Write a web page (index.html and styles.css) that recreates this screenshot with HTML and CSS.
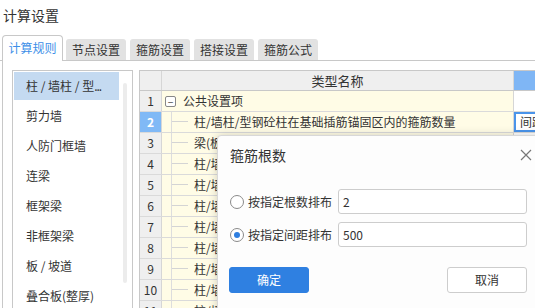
FILE: index.html
```html
<!DOCTYPE html>
<html lang="zh-CN">
<head>
<meta charset="utf-8">
<title>计算设置</title>
<link rel="stylesheet" href="styles.css">
</head>
<body>
<div class="page">
  <div class="title">计算设置</div>
  <div class="tabs">
    <div class="tab active">计算规则</div>
    <div class="tab">节点设置</div>
    <div class="tab">箍筋设置</div>
    <div class="tab">搭接设置</div>
    <div class="tab">箍筋公式</div>
  </div>
  <div class="panel">
    <div class="list">
      <div class="items">
        <div class="item selected">柱 / 墙柱 / 型<span class="dots">...</span></div>
        <div class="item">剪力墙</div>
        <div class="item">人防门框墙</div>
        <div class="item">连梁</div>
        <div class="item">框架梁</div>
        <div class="item">非框架梁</div>
        <div class="item">板 / 坡道</div>
        <div class="item">叠合板(整厚)</div>
      </div>
      <div class="scroll"></div>
    </div>
    <div class="grid">
      <div class="row head">
        <div class="num"></div>
        <div class="name center">类型名称</div>
        <div class="val hl"></div>
      </div>
      <div class="row">
        <div class="num">1</div>
        <div class="name"><span class="fold">−</span>公共设置项</div>
        <div class="val"></div>
      </div>
      <div class="row">
        <div class="num cur">2</div>
        <div class="name"><span class="branch"></span>柱/墙柱/型钢砼柱在基础插筋锚固区内的箍筋数量</div>
        <div class="val sel">间距</div>
      </div>
      <div class="row"><div class="num">3</div><div class="name"><span class="branch"></span>梁(板)上柱插筋锚固区内的箍筋数量</div><div class="val"></div></div>
      <div class="row"><div class="num">4</div><div class="name"><span class="branch"></span>柱/墙柱/型钢砼柱箍筋加密区根数</div><div class="val"></div></div>
      <div class="row"><div class="num">5</div><div class="name"><span class="branch"></span>柱/墙柱/型钢砼柱箍筋非加密区根数</div><div class="val"></div></div>
      <div class="row"><div class="num">6</div><div class="name"><span class="branch"></span>柱/墙柱/型钢砼柱箍筋长度计算</div><div class="val"></div></div>
      <div class="row"><div class="num">7</div><div class="name"><span class="branch"></span>柱/墙柱/型钢砼柱纵筋搭接范围</div><div class="val"></div></div>
      <div class="row"><div class="num">8</div><div class="name"><span class="branch"></span>柱/墙柱/型钢砼柱顶部节点</div><div class="val"></div></div>
      <div class="row"><div class="num">9</div><div class="name"><span class="branch"></span>柱/墙柱/型钢砼柱根部节点</div><div class="val"></div></div>
      <div class="row"><div class="num">10</div><div class="name"><span class="branch"></span>柱/墙柱/型钢砼柱变截面</div><div class="val"></div></div>
      <div class="row"><div class="num">11</div><div class="name"><span class="branch"></span>柱/墙柱/型钢砼柱插筋</div><div class="val"></div></div>
    </div>
  </div>
</div>

<div class="dialog">
  <div class="dlg-head">
    <span class="dlg-title">箍筋根数</span>
    <svg class="close" width="12" height="12" viewBox="0 0 12 12"><path d="M1 1L11 11M11 1L1 11" stroke="#777" stroke-width="1.2" fill="none"/></svg>
  </div>
  <div class="dlg-body">
    <div class="opt">
      <span class="radio"></span>
      <span class="lbl">按指定根数排布</span>
      <div class="input">2</div>
    </div>
    <div class="opt">
      <span class="radio on"></span>
      <span class="lbl">按指定间距排布</span>
      <div class="input">500</div>
    </div>
    <div class="btns">
      <div class="btn primary">确定</div>
      <div class="btn">取消</div>
    </div>
  </div>
</div>
</body>
</html>
```

FILE: styles.css
```css
* { box-sizing: border-box; }
html, body {
  margin: 0;
  padding: 0;
  width: 535px;
  height: 308px;
  overflow: hidden;
  background: #fff;
  font-family: "Noto Sans CJK SC", "Noto Sans", sans-serif;
  color: #333;
  font-size: 12px;
}
.page { position: relative; }
.title {
  font-size: 14px;
  line-height: 20px;
  padding: 5px 0 0 3px;
  height: 35px;
}
.tabs {
  display: flex;
  align-items: flex-end;
  gap: 4px;
  height: 26px;
  border-bottom: 1px solid #c8c8c8;
  padding-left: 2px;
}
.tab {
  width: 60px;
  height: 21px;
  line-height: 21px;
  text-align: center;
  background: #e2e2e2;
  border-radius: 3px 3px 0 0;
  color: #333;
}
.tab.active {
  width: 61px;
  height: 26px;
  line-height: 24px;
  margin-bottom: -1px;
  background: #fff;
  border: 1px solid #c8c8c8;
  border-bottom: none;
  border-radius: 4px 4px 0 0;
  color: #3d8fe8;
  margin-right: -1px;
}
.panel {
  display: flex;
  align-items: flex-start;
  gap: 6px;
  margin-left: 2px;
  border-left: 1px solid #c8c8c8;
  padding: 9px 0 0 9px;
  height: 260px;
}
.list {
  width: 121px;
  height: 260px;
  border: 1px solid #c8c8c8;
  display: flex;
  padding: 1px 0 0 1px;
  flex-shrink: 0;
}
.items {
  width: 105px;
  flex-shrink: 0;
  display: flex;
  flex-direction: column;
  gap: 2px;
}
.item {
  height: 28px;
  line-height: 28px;
  padding-left: 12px;
  white-space: nowrap;
}
.dots { letter-spacing: -1px; }
.item.selected { background: #c4daf1; }
.scroll {
  width: 4px;
  height: 200px;
  margin: 11px 0 0 4px;
  background: #ececec;
  border-radius: 2px;
}
.grid {
  flex: 1;
  border-left: 1px solid #c8c8c8;
  border-top: 1px solid #c8c8c8;
  min-width: 0;
}
.row {
  display: grid;
  grid-template-columns: 22px 352px 60px;
  height: 21px;
  border-bottom: 1px solid #dadada;
}
.row.head {
  height: 20px;
  border-bottom: 1px solid #c8c8c8;
  background: #efefef;
}
.row > div {
  border-right: 1px solid #d6d6d6;
  line-height: 20px;
  white-space: nowrap;
  overflow: hidden;
}
.num {
  background: #efefef;
  text-align: center;
  font-size: 12px;
}
.head .num, .head .name { background: #efefef; }
.num.cur {
  background: #80b9f6;
  color: #fff;
  font-weight: bold;
}
.name {
  background: #fffce6;
  position: relative;
  padding-left: 21px;
}
.name.center {
  text-align: center;
  padding-left: 0;
  font-size: 13px;
}
.val { background: #fff; }
.val.hl { background: #7fb6f5; }
.val.sel {
  border: 2px solid #4a94ea;
  line-height: 16px;
  padding-left: 4px;
}
.fold {
  position: absolute;
  left: 3px;
  top: 5px;
  width: 11px;
  height: 11px;
  border: 1px solid #888;
  border-radius: 2px;
  background: #fff;
  font-size: 10px;
  line-height: 9px;
  text-align: center;
  color: #444;
}
.branch {
  position: absolute;
  left: 9px;
  top: -1px;
  bottom: -1px;
  border-left: 1px solid #ddd;
  width: 16px;
}
.branch::after {
  content: "";
  position: absolute;
  left: 0;
  top: 10px;
  width: 16px;
  border-top: 1px solid #d4d4d4;
}
.name:has(.branch) { padding-left: 32px; }

.dialog {
  position: absolute;
  left: 217px;
  top: 135px;
  width: 330px;
  height: 190px;
  background: #fdfdfd;
  border: 1px solid #d8d8d8;
  border-radius: 4px;
  box-shadow: 0 0 10px rgba(0,0,0,0.18);
}
.dlg-head {
  height: 38px;
  display: flex;
  align-items: center;
  padding: 0 0 0 12px;
  width: 316px;
  justify-content: space-between;
}
.dlg-title { font-size: 14px; color: #333; }
.close { margin-right: 2px; }
.dlg-body {
  padding: 15px 0 0 11px;
  width: 310px;
  display: flex;
  flex-direction: column;
  gap: 8px;
}
.opt {
  display: flex;
  align-items: center;
  height: 25px;
}
.radio {
  width: 14px;
  height: 14px;
  margin-left: 1px;
  border: 1px solid #8a8a8a;
  border-radius: 50%;
  background: #fff;
  position: relative;
  flex-shrink: 0;
}
.radio.on::after {
  content: "";
  position: absolute;
  left: 3px;
  top: 3px;
  width: 6px;
  height: 6px;
  border-radius: 50%;
  background: #2e7ee0;
}
.lbl { margin-left: 4px; width: 84px; font-size: 12px; white-space: nowrap; flex-shrink: 0; }
.input {
  margin-left: 6px;
  width: 189px;
  height: 25px;
  border: 1px solid #cdcdcd;
  border-radius: 3px;
  background: #fff;
  line-height: 23px;
  padding-left: 4px;
  font-size: 12px;
}
.btns {
  display: flex;
  justify-content: space-between;
  margin-top: 12px;
  width: 298px;
}
.btn {
  width: 80px;
  height: 26px;
  line-height: 24px;
  text-align: center;
  border: 1px solid #cdcdcd;
  border-radius: 3px;
  background: #fff;
  font-size: 12px;
}
.btn.primary {
  background: #2f80e1;
  border-color: #2f80e1;
  color: #fff;
}
```
